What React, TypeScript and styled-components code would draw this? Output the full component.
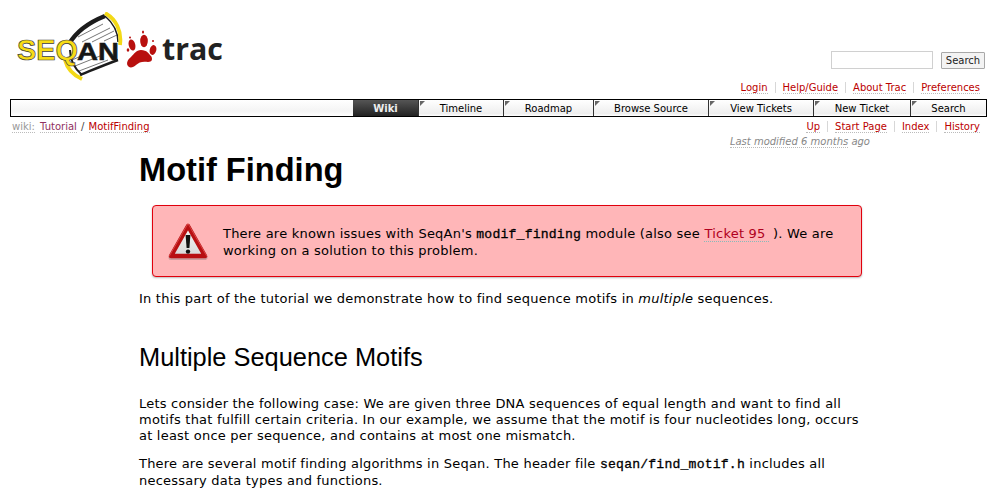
import styled, { createGlobalStyle } from "styled-components";

const GlobalStyle = createGlobalStyle`
  html, body {
    margin: 0;
    padding: 0;
    background: #fff;
    color: #000;
    font-family: "DejaVu Sans", Verdana, sans-serif;
    overflow: hidden;
  }
`;

const metaLinks = ["Login", "Help/Guide", "About Trac", "Preferences"];
const ctxtLinks = ["Up", "Start Page", "Index", "History"];
const navItems = [
  { label: "Wiki", width: 65, active: true },
  { label: "Timeline", width: 85 },
  { label: "Roadmap", width: 90 },
  { label: "Browse Source", width: 115 },
  { label: "View Tickets", width: 105 },
  { label: "New Ticket", width: 97 },
  { label: "Search", width: 76 },
];

function Logo() {
  return (
    <svg width="210" height="70" viewBox="0 0 210 70">
      <g transform="translate(-16 -12)">
        <path d="M70 42 C78 28 92 20 105 16 C114 22 119 32 118 44 L118 60 C106 64 92 70 82 75 C74 68 68 58 70 42 Z" fill="#fff" />
        <g stroke="#777" strokeWidth="1" fill="none">
          <path d="M78 37 L103 24" />
          <path d="M82 42 L110 28" />
          <path d="M92 42 L114 31" />
          <path d="M104 41 L117 35" />
          <path d="M72 60 L88 53" />
          <path d="M75 66 L100 56" />
          <path d="M79 71 L108 60" />
        </g>
        <path d="M69 44 C76 32 90 22 105 16" fill="none" stroke="#1c1c1c" strokeWidth="4.5" />
        <path d="M105 16 C112 22 118 30 118 42" fill="none" stroke="#1c1c1c" strokeWidth="1.5" />
        <path d="M70 50 C70 60 74 68 82 75" fill="none" stroke="#1c1c1c" strokeWidth="2" />
        <path d="M80 75 C90 71 104 65 118 60" fill="none" stroke="#1c1c1c" strokeWidth="2.5" />
        <path d="M105 13 C116 19 122 31 120 45" fill="none" stroke="#f3d916" strokeWidth="3.8" />
        <path d="M65 60 C67 68 73 75 82 79" fill="none" stroke="#f3d916" strokeWidth="3.8" />
        <text x="17" y="60" fontFamily="Liberation Sans, sans-serif" fontWeight="700" fontSize="30" fill="#f7dc16" stroke="#3a3a3a" strokeWidth="0.7" textLength="61" lengthAdjust="spacingAndGlyphs">SEQ</text>
        <text x="77" y="60" fontFamily="Liberation Sans, sans-serif" fontWeight="700" fontSize="24" fill="#161616" stroke="#161616" strokeWidth="0.5" textLength="42" lengthAdjust="spacingAndGlyphs">AN</text>
        <g fill="#b8100e">
          <path d="M129 67 C125 64 128 59 131 57 C134 54 136 50 141 50 C147 50 149 54 151 56 C153 59 152 62 148 62 C143 61 139 62 136 65 C134 67 131 68 129 67 Z" />
          <ellipse cx="132" cy="45" rx="3.3" ry="5.6" transform="rotate(-15 132 45)" />
          <ellipse cx="144" cy="41" rx="3.8" ry="6.2" />
          <ellipse cx="153" cy="50" rx="3.3" ry="5" transform="rotate(15 153 50)" />
          <ellipse cx="128" cy="50" rx="1.3" ry="1.8" />
          <circle cx="130" cy="37.5" r="1" />
          <ellipse cx="143" cy="32" rx="1" ry="1.6" />
          <circle cx="153" cy="41" r="1" />
        </g>
        <text x="162" y="60" fontFamily="Open Sans, sans-serif" fontWeight="700" fontSize="31" fill="#222" textLength="61" lengthAdjust="spacingAndGlyphs">trac</text>
      </g>
    </svg>
  );
}

function WarningIcon() {
  return (
    <svg width="42" height="40" viewBox="0 0 42 40">
      <defs>
        <linearGradient id="warnFill" x1="0" y1="0" x2="0" y2="1">
          <stop offset="0" stopColor="#f6f6f6" />
          <stop offset="1" stopColor="#d8d8d8" />
        </linearGradient>
      </defs>
      <path d="M21 5 L38 35 H4 Z" fill="none" stroke="#a88" strokeWidth="5" strokeLinejoin="round" transform="translate(0 1.5)" opacity="0.6" />
      <path d="M21 5 L38 35 H4 Z" fill="url(#warnFill)" stroke="#b80f12" strokeWidth="4.4" strokeLinejoin="round" />
      <path d="M21 2.6 L40 35.6" stroke="#e65a5a" strokeWidth="0.7" fill="none" />
      <path d="M21 2.6 L2 35.6" stroke="#e65a5a" strokeWidth="0.7" fill="none" />
      <path d="M18.6 14 H23.4 L22.4 27 H19.6 Z" fill="#111" />
      <circle cx="21" cy="30.6" r="2.2" fill="#111" />
    </svg>
  );
}

export default function App() {
  return (
    <Page>
      <GlobalStyle />
      <Banner>
        <LogoLink href="#">
          <Logo />
        </LogoLink>
        <SearchForm>
          <SearchInput type="text" />
          <SearchButton type="button">Search</SearchButton>
        </SearchForm>
      </Banner>
      <MetaNav>
        {metaLinks.map((l, i) => (
          <SepItem key={l} $first={i === 0}>
            <NavLink href="#">{l}</NavLink>
          </SepItem>
        ))}
      </MetaNav>
      <MainNav>
        {navItems.map((n) => (
          <NavTab key={n.label} $active={!!n.active} $width={n.width}>
            {n.label}
          </NavTab>
        ))}
      </MainNav>
      <ContextRow>
        <Crumbs>
          <WikiLabel>wiki:</WikiLabel> <CrumbFirst href="#">Tutorial</CrumbFirst> <Slash>/</Slash> <NavLink href="#">MotifFinding</NavLink>
        </Crumbs>
        <ContextNav>
          {ctxtLinks.map((l, i) => (
            <SepItem key={l} $first={i === 0}>
              <NavLink href="#">{l}</NavLink>
            </SepItem>
          ))}
        </ContextNav>
      </ContextRow>
      <Modified>
        <ModifiedLink>Last modified 6 months</ModifiedLink> ago
      </Modified>
      <Content>
        <Title>Motif Finding</Title>
        <WarningBox>
          <WarningIcon />
          <WarningText>
            There are known issues with SeqAn's <Code>modif_finding</Code> module (also see{" "}
            <TicketLink href="#">Ticket 95</TicketLink> ). We are working on a solution to this problem.
          </WarningText>
        </WarningBox>
        <Para>
          In this part of the tutorial we demonstrate how to find sequence motifs in <em>multiple</em> sequences.
        </Para>
        <Heading>Multiple Sequence Motifs</Heading>
        <Para>
          Lets consider the following case: We are given three DNA sequences of equal length and want to find all
          motifs that fulfill certain criteria. In our example, we assume that the motif is four nucleotides long,
          occurs at least once per sequence, and contains at most one mismatch.
        </Para>
        <Para>
          There are several motif finding algorithms in Seqan. The header file <Code>seqan/find_motif.h</Code> includes
          all necessary data types and functions.
        </Para>
      </Content>
    </Page>
  );
}

const Page = styled.div`
  height: 491px;
  overflow: hidden;
  padding: 0 10px;
`;
const Banner = styled.div`
  display: flex;
  justify-content: space-between;
  height: 78px;
  padding-top: 12px;
  box-sizing: border-box;
`;
const LogoLink = styled.a`
  display: block;
  margin-left: 6px;
  height: 66px;
`;
const SearchForm = styled.form`
  display: flex;
  align-items: center;
  gap: 8px;
  height: 18px;
  margin: 39px 2px 0 0;
`;
const SearchInput = styled.input`
  width: 102px;
  height: 18px;
  box-sizing: border-box;
  border: 1px solid #d0d0d0;
  padding: 0;
  background: #fff;
`;
const SearchButton = styled.button`
  width: 44px;
  height: 17px;
  box-sizing: border-box;
  padding: 0;
  border: 1px solid #a8a8a8;
  border-radius: 1px;
  background: #f3f3f3;
  color: #222;
  font: 10px "DejaVu Sans", Verdana, sans-serif;
`;
const MetaNav = styled.div`
  display: flex;
  justify-content: flex-end;
  align-items: center;
  height: 21px;
  margin-right: 7px;
  padding-bottom: 3px;
  box-sizing: content-box;
  height: 18px;
  font-size: 10px;
`;
const SepItem = styled.span<{ $first?: boolean }>`
  padding: 0 7px;
  border-left: ${(p) => (p.$first ? "none" : "1px solid #d7d7d7")};
  line-height: 11px;
  &:last-child {
    padding-right: 0;
  }
`;
const NavLink = styled.a`
  color: #b00;
  text-decoration: none;
  border-bottom: 1px dotted #bbb;
`;
const MainNav = styled.nav`
  display: flex;
  justify-content: flex-end;
  height: 18px;
  box-sizing: border-box;
  border: 1px solid #000;
  background: linear-gradient(#fff, #f4f4f4 70%, #fff);
`;
const NavTab = styled.a<{ $active: boolean; $width: number }>`
  position: relative;
  width: ${(p) => p.$width}px;
  box-sizing: border-box;
  text-align: center;
  font-size: 10px;
  line-height: 17px;
  color: ${(p) => (p.$active ? "#eee" : "#000")};
  font-weight: ${(p) => (p.$active ? 700 : 400)};
  background: ${(p) => (p.$active ? "linear-gradient(#555, #222)" : "linear-gradient(#fff, #eee 85%, #fff)")};
  border-left: ${(p) => (p.$active ? "none" : "1px solid #333")};
  &::before {
    content: "";
    display: ${(p) => (p.$active ? "none" : "block")};
    position: absolute;
    left: 1px;
    top: 1px;
    width: 0;
    height: 0;
    border-top: 5px solid #666;
    border-right: 5px solid transparent;
  }
`;
const ContextRow = styled.div`
  display: flex;
  justify-content: space-between;
  align-items: center;
  height: 18px;
  font-size: 10px;
  margin-right: 7px;
  color: #444;
`;
const Crumbs = styled.div`
  margin-left: 2px;
`;
const WikiLabel = styled.span`
  color: #999;
  border-bottom: 1px dotted #bbb;
  margin-right: 2px;
`;
const Slash = styled.span`
  margin: 0 1px;
`;
const CrumbFirst = styled(NavLink)`
  color: #903060;
`;
const ContextNav = styled.div`
  display: flex;
`;
const Modified = styled.div`
  text-align: right;
  font-size: 10px;
  font-style: italic;
  color: #888;
  margin-right: 117px;
  line-height: 14px;
`;
const ModifiedLink = styled.span`
  border-bottom: 1px dotted #bbb;
`;
const Content = styled.main`
  margin: 0 118px 0 129px;
  font-size: 13px;
  line-height: 16px;
  letter-spacing: 0.22px;
`;
const Title = styled.h1`
  font: 700 32.6px/36px "Liberation Sans", Arial, sans-serif;
  letter-spacing: 0;
  margin: 3px 0 17px;
`;
const WarningBox = styled.div`
  display: flex;
  align-items: center;
  gap: 14px;
  margin: 0 0 14px 13px;
  width: 710px;
  height: 72px;
  box-sizing: border-box;
  border: 1px solid #e0000c;
  border-radius: 4px;
  background: #ffb6b8;
  box-shadow: 0 1px 2px #bbb;
  padding: 0 18px 0 14px;
`;
const WarningText = styled.div`
  flex: 1;
  padding-top: 2px;
`;
const Code = styled.code`
  font-family: "Liberation Mono", "Courier New", monospace;
  font-size: 13.1px;
  letter-spacing: 0.2px;
  -webkit-text-stroke: 0.3px #000;
`;
const TicketLink = styled.a`
  color: #b00020;
  text-decoration: none;
  border-bottom: 1px dotted #8bb;
  padding-right: 3px;
`;
const Para = styled.p`
  margin: 0 0 12px;
`;
const Heading = styled.h2`
  font: 400 25.4px/28px "Liberation Sans", Arial, sans-serif;
  letter-spacing: 0;
  margin: 36px 0 25px;
`;
